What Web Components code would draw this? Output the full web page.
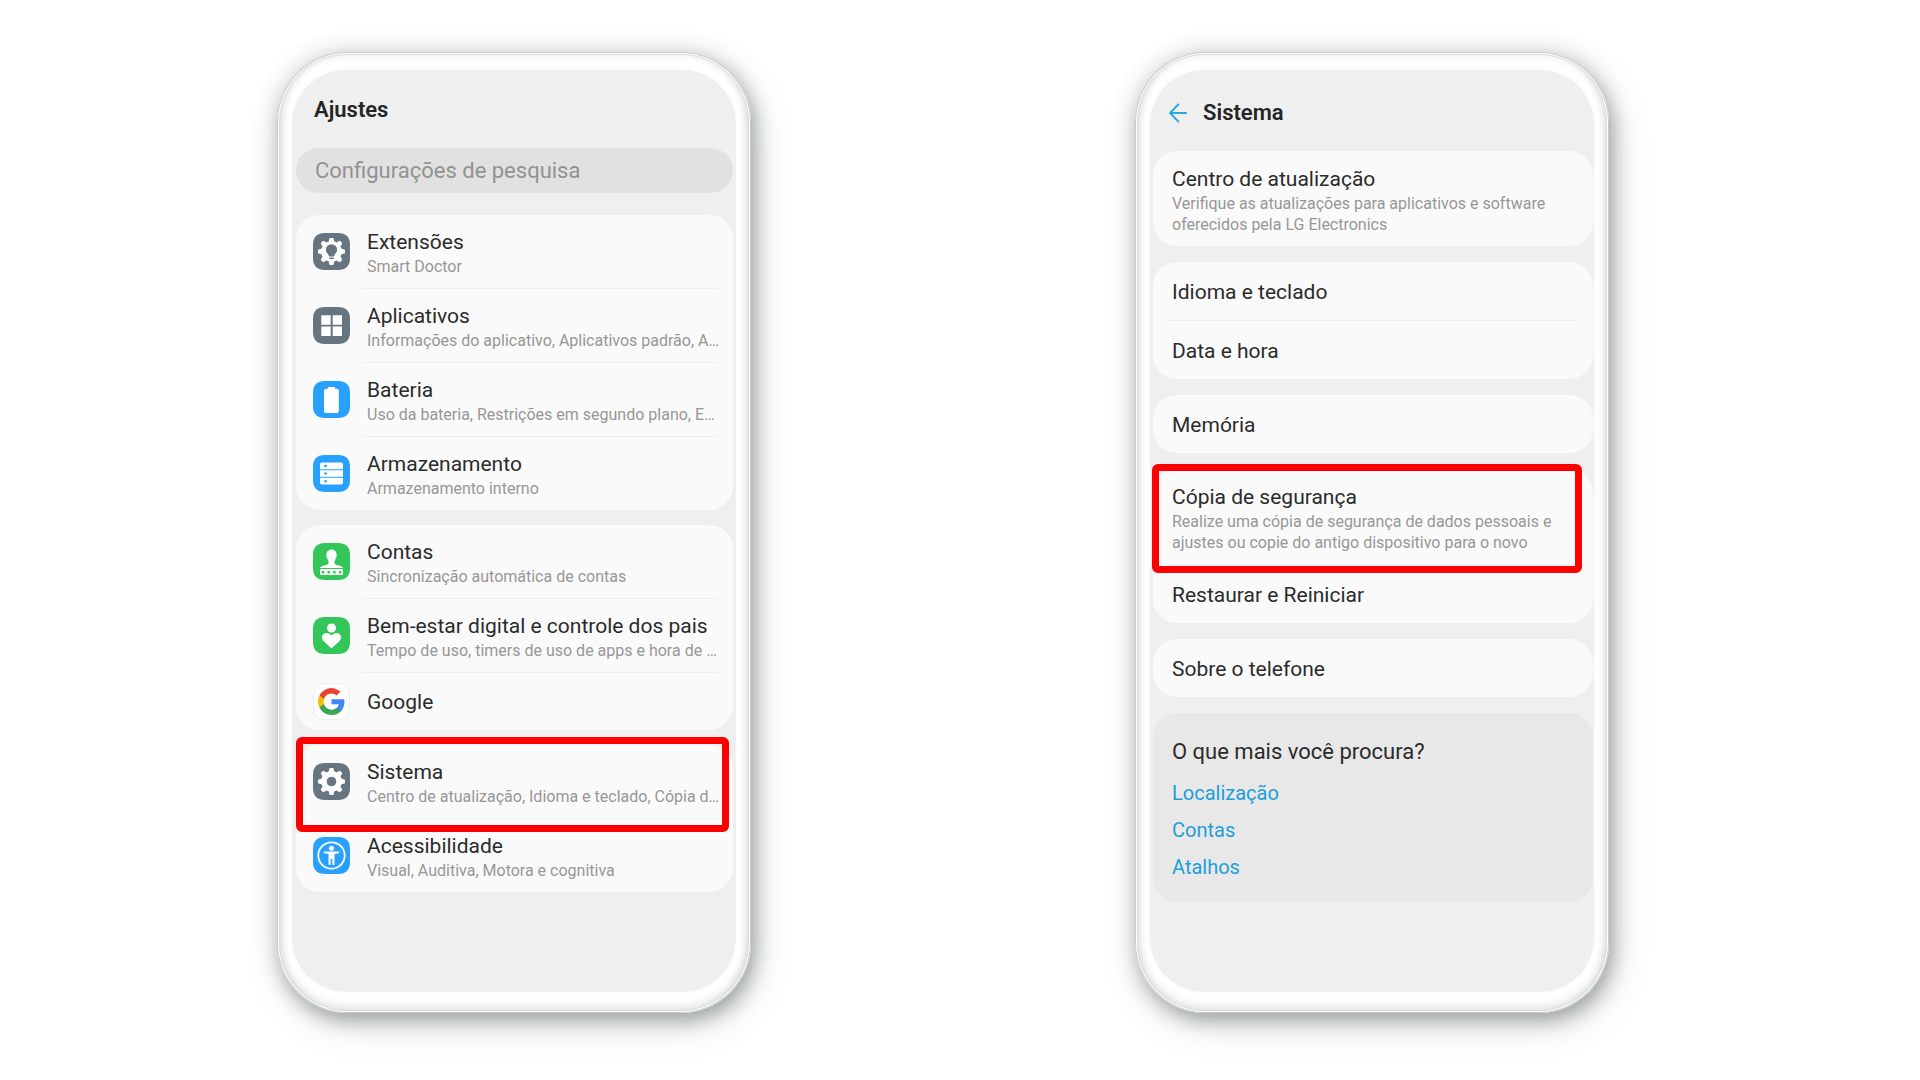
<!DOCTYPE html>
<html lang="pt-BR">
<head>
<meta charset="UTF-8">
<meta name="viewport" content="width=device-width, initial-scale=1">
<title>Ajustes</title>
<style>
    * {
        box-sizing: border-box;
    }
    body {
        margin: 0;
        background: #fff;
        color: #2b2b2b;
        font-family: Roboto, "Liberation Sans", sans-serif;
    }
    main {
        display: flex;
        justify-content: center;
        align-items: flex-start;
        gap: 20vw;
        min-height: 100vh;
        padding: 52px 34px 0 0;
    }
    #system {
        --screen-padding: 0 1px 0 3px;
    }
</style>
</head>
<body>
<main>
    <phone-frame id="settings">
        <screen-header heading="Ajustes"></screen-header>
        <search-box label="Configurações de pesquisa"></search-box>
        <card-list>
            <settings-card>
                <settings-row icon="extensions" heading="Extensões">Smart Doctor</settings-row>
                <settings-row icon="apps" heading="Aplicativos">Informações do aplicativo, Aplicativos padrão, A…</settings-row>
                <settings-row icon="battery" heading="Bateria">Uso da bateria, Restrições em segundo plano, E…</settings-row>
                <settings-row icon="storage" heading="Armazenamento">Armazenamento interno</settings-row>
            </settings-card>
            <settings-card>
                <settings-row icon="accounts" heading="Contas">Sincronização automática de contas</settings-row>
                <settings-row icon="wellbeing" heading="Bem-estar digital e controle dos pais">Tempo de uso, timers de uso de apps e hora de …</settings-row>
                <settings-row icon="google" heading="Google"></settings-row>
            </settings-card>
            <settings-card>
                <settings-row icon="system" heading="Sistema" marked style="--mark-inset: -8px 4px -14px 0">Centro de atualização, Idioma e teclado, Cópia d…</settings-row>
                <settings-row icon="accessibility" heading="Acessibilidade">Visual, Auditiva, Motora e cognitiva</settings-row>
            </settings-card>
        </card-list>
    </phone-frame>

    <phone-frame id="system">
        <screen-header heading="Sistema" back></screen-header>
        <card-list style="--card-gap: 16px">
            <settings-card>
                <settings-row heading="Centro de atualização">Verifique as atualizações para aplicativos e software oferecidos pela LG Electronics</settings-row>
            </settings-card>
            <settings-card>
                <settings-row heading="Idioma e teclado"></settings-row>
                <settings-row heading="Data e hora"></settings-row>
            </settings-card>
            <settings-card>
                <settings-row heading="Memória"></settings-row>
            </settings-card>
            <settings-card>
                <settings-row heading="Cópia de segurança" marked style="--mark-inset: -5px 11px -9px -1px">Realize uma cópia de segurança de dados pessoais e ajustes ou copie do antigo dispositivo para o novo</settings-row>
                <settings-row heading="Restaurar e Reiniciar"></settings-row>
            </settings-card>
            <settings-card>
                <settings-row heading="Sobre o telefone"></settings-row>
            </settings-card>
            <more-links heading="O que mais você procura?">
                <a href="#localizacao">Localização</a>
                <a href="#contas">Contas</a>
                <a href="#atalhos">Atalhos</a>
            </more-links>
        </card-list>
    </phone-frame>
</main>

<script>
const GREY = "#667580";
const BLUE = "#28a0ff";
const GREEN = "#33c759";

// eight teeth around a disc
function gear(inner) {
    let teeth = "";
    for (let i = 0; i < 8; i++) {
        teeth += `<path d="M15.6 9.5 16.4 5.6Q16.6 5 17.2 5h2.6q.6 0 .8.6l.8 3.9z" transform="rotate(${i * 45} 18.5 18.5)"/>`;
    }
    return `<g fill="#fff"><circle cx="18.5" cy="18.5" r="10.4"/>${teeth}</g>${inner}`;
}

const ICONS = {
    extensions: {
        color: GREY,
        art: gear(`<g fill="${GREY}"><path d="M18.5 11.2a5.6 5.6 0 0 0-5.6 5.6c0 2.6 1.7 3.5 2.6 5.2.4.8.4 1.5 1 1.5h4c.6 0 .6-.7 1-1.5.9-1.7 2.6-2.6 2.6-5.2a5.6 5.6 0 0 0-5.6-5.6z"/><rect x="16.2" y="24.5" width="4.6" height="1.5" rx=".7"/></g>`)
    },
    apps: {
        color: GREY,
        art: `<path fill="#fff" d="M8.3 8.3h9.4v9.4H8.3zM19.7 8.3H29v9.4h-9.3zM8.3 19.5h9.4v9.4H8.3zM19.7 19.5H29v9.4h-9.3z"/>`
    },
    battery: {
        color: BLUE,
        art: `<path fill="#fff" d="M15 6h7v1.8h1.8q2 0 2 2V30q0 2-2 2H13q-2 0-2-2V9.8q0-2 2-2h2z"/>`
    },
    storage: {
        color: BLUE,
        art: `<g fill="#fff"><path d="M9 7.500h19q2 0 2 2v4.700H7V9.500q0-2 2-2zM7 15.2h23v6.600H7zM7 22.8h23v4.800q0 2-2 2H9q-2 0-2-2z"/></g>
            <g fill="${BLUE}"><rect x="11" y="10" width="3.2" height="2" rx="1"/><rect x="11" y="17.6" width="3.2" height="2" rx="1"/><rect x="11" y="25.2" width="3.2" height="2" rx="1"/></g>`
    },
    accounts: {
        color: GREEN,
        art: `<path fill="#fff" d="M18.5 6.5c3.100 0 5.2 2.3 5.2 5.500 0 3-1.5 4.3-2.2 6.200-.6 1.900.3 3.100 2.300 3.700 2.900.8 5.900 1.200 6.200 3.100H7c.3-1.900 3.300-2.300 6.200-3.100 2-.6 2.900-1.800 2.300-3.700-.7-1.900-2.200-3.200-2.200-6.200 0-3.200 2.100-5.500 5.200-5.500zM8 26h21q1 0 1 1v4q0 1-1 1H8q-1 0-1-1v-4q0-1 1-1z"/>
            <path stroke="${GREEN}" stroke-width="2.4" stroke-dasharray="2.4 3.3" d="M8.8 29.2h19.6"/>`
    },
    wellbeing: {
        color: GREEN,
        art: `<circle cx="18.5" cy="11" r="4.5" fill="#fff"/>
            <path fill="#fff" d="M18.5 31.5 10.8 24.2c-2.4-2.3-2.3-5.3-.5-7 2.300-2 6-1.400 8.200 1.600 2.200-3 5.900-3.600 8.200-1.600 1.800 1.700 1.900 4.700-.5 7z"/>`
    },
    google: {
        color: "#fdfdfd",
        art: `<rect x=".5" y=".5" width="36" height="36" rx="9.5" fill="none" stroke="#eceff0"/>
            <g transform="translate(5 5) scale(1.125)">
                <path fill="#4285f4" d="M23.5 12.3c0-.8-.1-1.6-.2-2.3H12v4.5h6.5a5.500 5.500 0 0 1-2.400 3.600v3h3.900c2.200-2.100 3.500-5.200 3.500-8.800z"/>
                <path fill="#34a853" d="M12 24c3.200 0 6-1.100 8-2.900l-3.900-3a7.200 7.200 0 0 1-10.800-3.800H1.300v3.100A12 12 0 0 0 12 24z"/>
                <path fill="#fbbc05" d="M5.300 14.300a7.200 7.200 0 0 1 0-4.600V6.600h-4a12 12 0 0 0 0 10.800z"/>
                <path fill="#ea4335" d="M12 4.800c1.800 0 3.300.6 4.600 1.800L20 3.200A12 12 0 0 0 1.300 6.600l4 3.100A7.200 7.200 0 0 1 12 4.800z"/>
            </g>`
    },
    system: {
        color: GREY,
        art: gear(`<circle cx="18.5" cy="18.5" r="4.8" fill="${GREY}"/>`)
    },
    accessibility: {
        color: BLUE,
        art: `<circle cx="18.5" cy="18.5" r="13.2" fill="none" stroke="#fff" stroke-width="1.8"/>
            <circle cx="18.5" cy="11.2" r="2.5" fill="#fff"/>
            <path fill="#fff" d="M11.5 14.6h14q.8 0 .8.8t-.8.9l-4 .8v10q0 .9-.9.9h-.5q-.8 0-.8-.9v-5.100h-1.600v5.100q0 .9-.8.9h-.5q-.9 0-.9-.9v-10l-4-.8q-.8-.1-.8-.9t.8-.8z"/>`
    }
};

class PhoneFrame extends HTMLElement {
    constructor() {
        super();
        this.attachShadow({ mode: "open" }).innerHTML = `
            <style>
                :host {
                    box-sizing: border-box;
                    display: flex;
                    flex: 0 1 474px;
                    min-width: 0;
                    min-height: calc(100vh - 119px);
                    padding: 18px 15px 21px;
                    border-radius: 70px;
                    background: #fff;
                    box-shadow:
                        inset 0 0 0 1px #c9c9c9,
                        inset 0 0 0 2px #fff,
                        inset 0 0 0 3px #dcdcdc,
                        inset 12px 0 10px -8px rgba(0, 0, 0, .08),
                        inset -12px 0 10px -8px rgba(0, 0, 0, .08),
                        inset 0 -5px 14px rgba(0, 0, 0, .1),
                        inset 0 0 12px rgba(0, 0, 0, .12),
                        4px 8px 16px rgba(60, 75, 70, .3),
                        6px 12px 36px rgba(60, 75, 70, .2),
                        0 0 24px rgba(60, 75, 70, .16);
                }
                section {
                    box-sizing: border-box;
                    flex: 1;
                    min-width: 0;
                    padding: var(--screen-padding, 0 3px 0 4px);
                    border-radius: 54px;
                    background: #efefef;
                    box-shadow: 0 0 0 1px #fff, 0 0 0 2px rgba(0, 0, 0, .02);
                }
            </style>
            <section><slot></slot></section>
        `;
    }
}

class ScreenHeader extends HTMLElement {
    constructor() {
        super();
        this.attachShadow({ mode: "open" });
    }

    connectedCallback() {
        const back = this.hasAttribute("back");
        this.shadowRoot.innerHTML = `
            <style>
                :host {
                    display: flex;
                    align-items: center;
                    gap: 16px;
                    padding: 27px 18px 25px;
                }
                :host([back]) {
                    padding: 30px 16px 25px;
                }
                h1 {
                    margin: 0;
                    font-size: 22px;
                    font-weight: 600;
                    line-height: 26px;
                    color: #252525;
                }
                button {
                    display: flex;
                    padding: 0;
                    border: 0;
                    background: none;
                    cursor: pointer;
                }
            </style>
            ${back ? `<button type="button" aria-label="Voltar">
                <svg width="18" height="20" viewBox="0 0 18 20" fill="none" stroke="#2ba5e0" stroke-width="1.8" stroke-linecap="round" stroke-linejoin="round"><path d="M17.2 10H1M9.3 1.5 1 10l8.3 8.5"/></svg>
            </button>` : ""}
            <h1>${this.getAttribute("heading")}</h1>
        `;
    }
}

class SearchBox extends HTMLElement {
    constructor() {
        super();
        this.attachShadow({ mode: "open" });
    }

    connectedCallback() {
        const label = this.getAttribute("label");
        this.shadowRoot.innerHTML = `
            <style>
                :host {
                    display: block;
                    margin-bottom: 22px;
                }
                input {
                    box-sizing: border-box;
                    display: block;
                    width: 100%;
                    height: 45px;
                    padding: 0 19px;
                    border: 0;
                    border-radius: 23px;
                    background: #e1e1e1;
                    font: 22px Roboto, "Liberation Sans", sans-serif;
                    color: #2b2b2b;
                }
                input::placeholder {
                    color: #929292;
                    opacity: 1;
                }
            </style>
            <input type="search" placeholder="${label}" aria-label="${label}">
        `;
    }
}

class CardList extends HTMLElement {
    constructor() {
        super();
        this.attachShadow({ mode: "open" }).innerHTML = `
            <style>
                :host {
                    display: flex;
                    flex-direction: column;
                    gap: var(--card-gap, 15px);
                }
            </style>
            <slot></slot>
        `;
    }
}

class SettingsCard extends HTMLElement {
    constructor() {
        super();
        this.attachShadow({ mode: "open" }).innerHTML = `
            <style>
                :host {
                    display: block;
                    border-radius: 24px;
                    background: #fafafa;
                }
            </style>
            <slot></slot>
        `;
    }
}

class SettingsRow extends HTMLElement {
    constructor() {
        super();
        this.attachShadow({ mode: "open" });
    }

    renderIcon() {
        const icon = ICONS[this.getAttribute("icon")];
        if (!icon) return "";
        return `<svg width="37" height="37" viewBox="0 0 37 37" aria-hidden="true">
            <path fill="${icon.color}" d="M12 0h13q12 0 12 12v13q0 12-12 12H12Q0 37 0 25V12Q0 0 12 0z"/>${icon.art}
        </svg>`;
    }

    connectedCallback() {
        const hasSummary = this.textContent.trim() !== "";
        this.shadowRoot.innerHTML = `
            <style>
                :host {
                    display: block;
                    position: relative;
                }
                :host(:not(:first-child))::before {
                    content: "";
                    display: block;
                    height: 1px;
                    margin: 0 14px 0 16px;
                    background: #eeeeee;
                }
                :host([icon]:not(:first-child))::before {
                    margin: 0 15px 0 66px;
                }
                /* red marker drawn around the step to follow */
                :host([marked])::after {
                    content: "";
                    position: absolute;
                    inset: var(--mark-inset);
                    z-index: 1;
                    border: 7px solid #f00;
                    border-radius: 6px;
                    pointer-events: none;
                }
                a {
                    display: flex;
                    align-items: center;
                    gap: 17px;
                    padding: 0 16px 0 19px;
                    color: inherit;
                    text-decoration: none;
                }
                svg {
                    flex: none;
                }
                .text {
                    min-width: 0;
                    padding: 17px 0 15px;
                }
                .text.two {
                    padding: 15px 0 11px;
                }
                :host([icon]) a {
                    padding: 0 13px 0 17px;
                }
                :host([icon]) .text {
                    padding: 16px 0 15px;
                }
                :host([icon]) .text.two {
                    padding: 14px 0 11px;
                }
                h2 {
                    margin: 0;
                    font-size: 21px;
                    font-weight: 400;
                    line-height: 26px;
                }
                p {
                    margin: 1px 0 0;
                    font-size: 16px;
                    line-height: 21px;
                    color: #979797;
                }
                :host([icon]) p {
                    overflow: hidden;
                    white-space: nowrap;
                    text-overflow: ellipsis;
                }
            </style>
            <a href="#">
                ${this.renderIcon()}
                <div class="text ${hasSummary ? "two" : ""}">
                    <h2>${this.getAttribute("heading")}</h2>
                    ${hasSummary ? "<p><slot></slot></p>" : ""}
                </div>
            </a>
        `;
    }
}

class MoreLinks extends HTMLElement {
    constructor() {
        super();
        this.attachShadow({ mode: "open" });
    }

    connectedCallback() {
        this.shadowRoot.innerHTML = `
            <style>
                :host {
                    display: block;
                    padding: 26px 19px 16px;
                    border-radius: 24px;
                    background: #e8e8e8;
                }
                h2 {
                    margin: 0 0 10px;
                    font-size: 22px;
                    font-weight: 400;
                    line-height: 26px;
                }
                nav {
                    display: flex;
                    flex-direction: column;
                    align-items: flex-start;
                }
                ::slotted(a) {
                    font-size: 20px;
                    line-height: 37px;
                    color: #1e9edb;
                    text-decoration: none;
                }
            </style>
            <h2>${this.getAttribute("heading")}</h2>
            <nav><slot></slot></nav>
        `;
    }
}

window.customElements.define("phone-frame", PhoneFrame);
window.customElements.define("screen-header", ScreenHeader);
window.customElements.define("search-box", SearchBox);
window.customElements.define("card-list", CardList);
window.customElements.define("settings-card", SettingsCard);
window.customElements.define("settings-row", SettingsRow);
window.customElements.define("more-links", MoreLinks);
</script>
</body>
</html>
